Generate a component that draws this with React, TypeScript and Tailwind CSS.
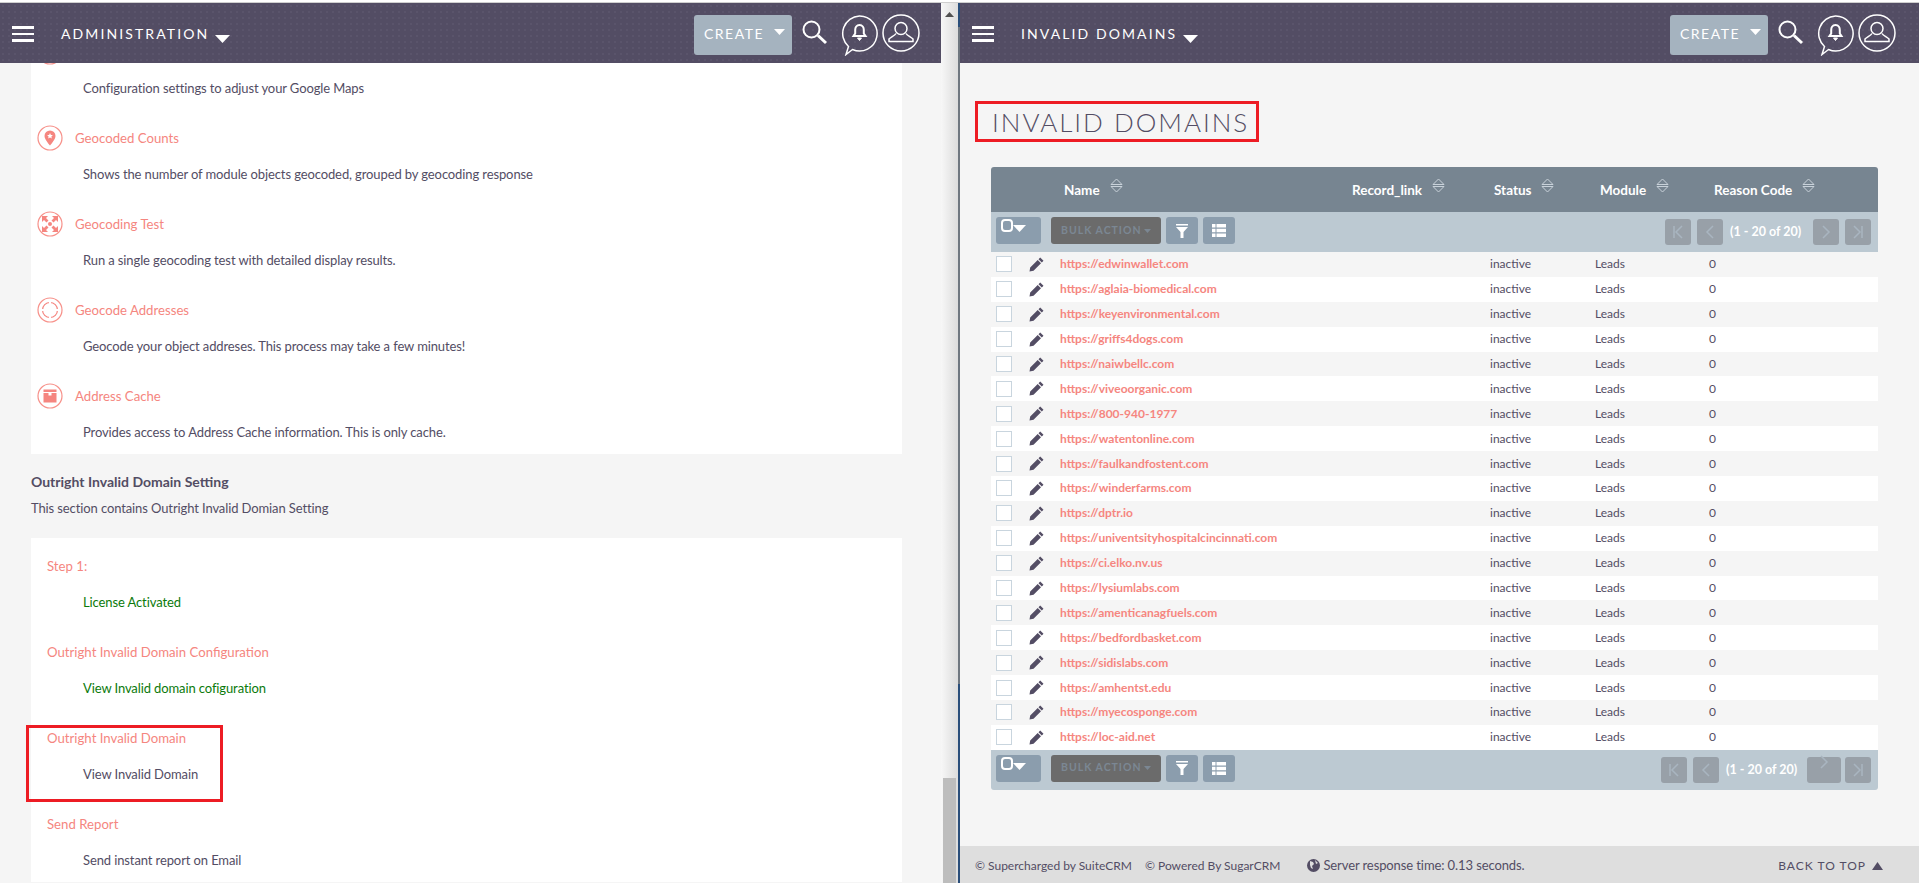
import type { ReactNode } from "react";

const domains = [
  "edwinwallet.com",
  "aglaia-biomedical.com",
  "keyenvironmental.com",
  "griffs4dogs.com",
  "naiwbellc.com",
  "viveoorganic.com",
  "800-940-1977",
  "watentonline.com",
  "faulkandfostent.com",
  "winderfarms.com",
  "dptr.io",
  "univentsityhospitalcincinnati.com",
  "ci.elko.nv.us",
  "lysiumlabs.com",
  "amenticanagfuels.com",
  "bedfordbasket.com",
  "sidislabs.com",
  "amhentst.edu",
  "myecosponge.com",
  "loc-aid.net",
];

const columns = ["Name", "Record_link", "Status", "Module", "Reason Code"];

function CircleIcon({ children }: { children: ReactNode }) {
  return (
    <svg width="26" height="26" viewBox="0 0 26 26" className="shrink-0">
      <circle cx="13" cy="13" r="12" fill="none" stroke="#f7918a" strokeWidth="1.2" />
      {children}
    </svg>
  );
}

const PinIcon = (
  <CircleIcon>
    <path d="M13 5.500a5.500 5.500 0 0 0-5.500 5.500c0 3.600 5.500 9.500 5.500 9.500s5.500-5.900 5.500-9.500A5.500 5.500 0 0 0 13 5.500Z" fill="#f58680" />
    <path d="M13 8l.9 1.900 2 .2-1.500 1.400.4 2-1.800-1-1.800 1 .4-2-1.500-1.400 2-.2Z" fill="#fff" />
  </CircleIcon>
);

const ExpandIcon = (
  <CircleIcon>
    <circle cx="13" cy="13" r="2" fill="#f58680" />
    <path d="M5 5h6l-2 2 2.500 2.500-2 2L7 9l-2 2ZM21 5v6l-2-2-2.500 2.500-2-2L17 7l-2-2ZM5 21v-6l2 2 2.500-2.500 2 2L9 19l2 2ZM21 21h-6l2-2-2.500-2.500 2-2L19 17l2-2Z" fill="#f58680" />
  </CircleIcon>
);

const TargetIcon = (
  <CircleIcon>
    <circle cx="13" cy="13" r="7.500" fill="none" stroke="#f58680" strokeWidth="1.200" />
    <path d="M13 4v4M13 18v4M4 13h4M18 13h4" stroke="#fff" strokeWidth="2" />
  </CircleIcon>
);

const BoxIcon = (
  <CircleIcon>
    <path d="M6.500 6.500h13v2.500h-13ZM6.500 10h5v2.500h3V10h5v9.500h-13Z" fill="#f58680" />
  </CircleIcon>
);

function Hamburger() {
  return (
    <div className="flex flex-col gap-[4px] w-[22px]">
      <div className="h-[2.5px] bg-white" />
      <div className="h-[2.5px] bg-white" />
      <div className="h-[2.5px] bg-white" />
    </div>
  );
}

function AppHeader({ title, left, right }: { title: string; left: string; right: string }) {
  return (
    <div className={`relative z-10 h-[60px] shrink-0 flex items-start bg-[#534d64] bg-[radial-gradient(#5a546b_1px,transparent_1px)] bg-[length:6px_6px] ${left} ${right}`}>
      <div className="mt-[23px]">
        <Hamburger />
      </div>
      <span className="ml-[27px] mt-[21px] text-[14px] leading-5 tracking-[2.1px] text-white">{title}</span>
      <svg width="15" height="8" viewBox="0 0 15 8" className="ml-[6px] mt-[32px]">
        <path d="M0 0h15L7.500 8Z" fill="#fff" />
      </svg>
      <div className="ml-auto mt-[12px] w-[98px] h-[40px] rounded-[3px] bg-[#a5b3bf] flex items-center pb-[4px] pl-[10px] text-[14px] tracking-[1.500px] text-white">
        CREATE
        <svg width="11" height="6" viewBox="0 0 11 6" className="ml-[10px] -mt-[2px]">
          <path d="M0 0h11L5.500 6Z" fill="#fff" />
        </svg>
      </div>
      <svg width="26" height="25" viewBox="0 0 26 25" className="ml-[10px] mt-[17px]" fill="none" stroke="#fff">
        <circle cx="9.500" cy="9.500" r="8" strokeWidth="2" />
        <path d="M16 15.500l8 7.500" strokeWidth="3" />
      </svg>
      <svg width="37" height="41" viewBox="0 0 37 41" className="ml-[13px] mt-[12px]" fill="none" stroke="#fff">
        <path d="M18.500 1a17.500 17.500 0 1 1-7 33.500L5 39.500l2.500-8A17.500 17.500 0 0 1 18.500 1Z" strokeWidth="1.500" />
        <path d="M18.500 10c-3 0-4.300 2.300-4.300 5v3.500l-1.700 2.500h12l-1.700-2.500V15c0-2.700-1.300-5-4.300-5Z" strokeWidth="2" />
        <path d="M16.500 23h4l-2 2.500Z" fill="#fff" />
      </svg>
      <svg width="38" height="38" viewBox="0 0 38 38" className="ml-[4px] mt-[11px]" fill="none" stroke="#fff" strokeWidth="1.500">
        <circle cx="19" cy="19" r="18" />
        <circle cx="19" cy="14.500" r="6" />
        <path d="M14 19.500c-1 2-5 3.500-7 5.500v2.500h24V25c-2-2-6-3.500-7-5.500" />
      </svg>
    </div>
  );
}

function Item({
  icon,
  title,
  desc,
  green,
  inset,
  children,
}: {
  icon?: ReactNode;
  title: string;
  desc: string;
  green?: boolean;
  inset: string;
  children?: ReactNode;
}) {
  return (
    <div className="relative h-[86px]">
      <div className={`h-[26px] flex items-center gap-[12px] text-[13.2px] text-[#f58680] ${inset}`}>
        {icon}
        {title && <span className="pt-[2px]">{title}</span>}
      </div>
      <div className={`mt-[13px] h-5 leading-5 ml-[52px] text-[13px] tracking-[-0.11px] ${green ? "text-[#0b7a0b]" : "text-[#534d64]"}`}>{desc}</div>
      {children}
    </div>
  );
}

function AdminPane() {
  return (
    <div className="w-[941px] shrink-0 flex flex-col h-[880px] overflow-hidden">
      <AppHeader title="ADMINISTRATION" left="pl-[12px]" right="pr-[21px]" />
      <div className="pl-[31px] w-[902px]">
        <div className="-mt-[24px] bg-white h-[415px]">
          <Item icon={<CircleIcon>{null}</CircleIcon>} title="" desc="Configuration settings to adjust your Google Maps" inset="pl-[6px]" />
          <Item icon={PinIcon} title="Geocoded Counts" desc="Shows the number of module objects geocoded, grouped by geocoding response" inset="pl-[6px]" />
          <Item icon={ExpandIcon} title="Geocoding Test" desc="Run a single geocoding test with detailed display results." inset="pl-[6px]" />
          <Item icon={TargetIcon} title="Geocode Addresses" desc="Geocode your object addreses. This process may take a few minutes!" inset="pl-[6px]" />
          <Item icon={BoxIcon} title="Address Cache" desc="Provides access to Address Cache information. This is only cache." inset="pl-[6px]" />
        </div>
        <h3 className="mt-[18px] h-5 leading-5 text-[14px] font-bold text-[#534d64]">Outright Invalid Domain Setting</h3>
        <p className="mt-[6px] h-5 leading-5 text-[13px] tracking-[-0.11px] text-[#534d64]">This section contains Outright Invalid Domian Setting</p>
        <div className="mt-[20px] bg-white pt-[15px] h-[344px]">
          <Item title="Step 1:" desc="License Activated" green inset="pl-[16px]" />
          <Item title="Outright Invalid Domain Configuration" desc="View Invalid domain cofiguration" green inset="pl-[16px]" />
          <Item title="Outright Invalid Domain" desc="View Invalid Domain" inset="pl-[16px]">
            <div className="absolute -left-[5px] top-0 w-[197px] h-[77px] border-[3px] border-[#ed1c24]" />
          </Item>
          <Item title="Send Report" desc="Send instant report on Email" inset="pl-[16px]" />
        </div>
      </div>
    </div>
  );
}

function SortIcon() {
  return (
    <svg width="13" height="15" viewBox="0 0 13 15" fill="none" stroke="#c9d2da" strokeWidth="1" className="-mt-[1px]">
      <path d="M6.500 1L12 6.500H1ZM1 8.500h11L6.500 14Z" />
    </svg>
  );
}

function PageButton({ d, className, raised }: { d: string; className?: string; raised?: boolean }) {
  return (
    <div className={`h-[26px] rounded-[3px] bg-[#98a0a8] flex items-center justify-center ${className ?? "w-[26px]"}`}>
      <svg width="14" height="16" viewBox="0 0 14 16" fill="none" stroke="#a9b5c0" strokeWidth="1.5" className={raised ? "-mt-[16px]" : ""}>
        <path d={d} />
      </svg>
    </div>
  );
}

function Toolbar({ bottom }: { bottom?: boolean }) {
  return (
    <div className={`bg-[#bcc9d2] flex items-start pl-[5px] pr-[7px] pt-[5px] h-[40px] ${bottom ? "rounded-b-[3px]" : ""}`}>
      <div className="w-[45px] h-[27px] rounded-[3px] bg-[#8b9dad] flex items-start pl-[5px] pt-[2px]">
        <div className="w-[12px] h-[13px] rounded-[4px] border-[2px] border-white" />
        <svg width="13" height="7" viewBox="0 0 13 7" className="mt-[6px]">
          <path d="M0 0h13L6.500 7Z" fill="#fff" />
        </svg>
      </div>
      <div className="ml-[10px] w-[110px] h-[27px] rounded-[3px] bg-[#6b6b6b] flex items-center pl-[10px] text-[10.5px] font-bold tracking-[1px] text-[#7b8793]">
        BULK ACTION
        <svg width="7" height="4" viewBox="0 0 7 4" className="ml-[2px]">
          <path d="M0 0h7L3.500 4Z" fill="#7b8793" />
        </svg>
      </div>
      <div className="ml-[5px] w-[32px] h-[27px] rounded-[3px] bg-[#8b9dad] flex items-center justify-center">
        <svg width="14" height="14" viewBox="0 0 14 14">
          <path d="M1 0h12v1.500H1ZM1 3h12L8.500 8v6h-3V8Z" fill="#fff" />
        </svg>
      </div>
      <div className="ml-[5px] w-[32px] h-[27px] rounded-[3px] bg-[#8b9dad] flex items-center justify-center">
        <svg width="14" height="13" viewBox="0 0 14 13">
          <path d="M0 0h3.500v3.500H0ZM4.500 0H14v3.500H4.500ZM0 4.700h3.500v3.500H0ZM4.500 4.700H14v3.500H4.500ZM0 9.500h3.500V13H0ZM4.500 9.500H14V13H4.500Z" fill="#fff" />
        </svg>
      </div>
      <div className="ml-auto mt-[2px] flex items-center">
        <PageButton d="M3 2v12M11 2L5 8l6 6" />
        <PageButton d="M10 2L4 8l6 6" className="w-[26px] ml-[6px]" />
        <span className={`w-[73px] ml-[7px] text-[12.5px] font-bold text-white leading-none whitespace-nowrap ${bottom ? "mr-[8px]" : "mr-[10px]"}`}>(1 - 20 of 20)</span>
        {bottom ? (
          <>
            <PageButton d="M4 2l6 6-6 6" className="w-[34px]" raised />
            <PageButton d="M3 2l6 6-6 6M11 2v12" className="w-[26px] ml-[4px]" />
          </>
        ) : (
          <>
            <PageButton d="M4 2l6 6-6 6" />
            <PageButton d="M3 2l6 6-6 6M11 2v12" className="w-[26px] ml-[6px]" />
          </>
        )}
      </div>
    </div>
  );
}

function PencilIcon() {
  return (
    <svg width="15" height="15" viewBox="0 0 15 15">
      <path d="M11.200 0.500l3.300 3.300-1.700 1.700-3.300-3.300ZM8.700 3l3.300 3.300-7.500 7.500L0.500 14.500l.7-4Z" fill="#534d64" />
    </svg>
  );
}

function DomainsPane() {
  return (
    <div className="flex-1 min-w-0 flex flex-col h-[880px] bg-[#f5f5f5] overflow-hidden">
      <AppHeader title="INVALID DOMAINS" left="pl-[12px]" right="pr-[23px]" />
      <div className="ml-[15px] mt-[38px] w-[284px] h-[41px] border-[3px] border-[#ed1c24] flex items-center pl-[14px]">
        <h1 className="text-[26px] font-light tracking-[2px] text-[#534d64] leading-none whitespace-nowrap">INVALID DOMAINS</h1>
      </div>
      <div className="ml-[31px] mt-[25px] w-[887px] text-[12px]">
        <div className="h-[45px] rounded-t-[3px] bg-[#778591] grid grid-cols-[73px_288px_142px_106px_114px_1fr] items-start pt-[12px] text-[13.5px] font-bold text-white">
          <div />
          {columns.map((c) => (
            <div key={c} className="flex items-start gap-[10px] whitespace-nowrap">
              <span className="leading-5 mt-[1px]">{c}</span>
              <SortIcon />
            </div>
          ))}
        </div>
        <Toolbar />
        {domains.map((d, i) => (
          <div
            key={d}
            className={`h-[24.9px] grid grid-cols-[69px_430px_105px_114px_1fr] items-center text-[#534d64] ${i % 2 === 1 ? "bg-white" : "bg-[#f5f5f5]"}`}
          >
            <div className="flex items-center">
              <div className="ml-[5px] w-[16px] h-[16px] bg-white border border-[#c9d5de]" />
              <div className="ml-[17px]">
                <PencilIcon />
              </div>
            </div>
            <span className="font-bold text-[#f58680]">https://{d}</span>
            <span>inactive</span>
            <span>Leads</span>
            <span>0</span>
          </div>
        ))}
        <Toolbar bottom />
      </div>
      <div className="mt-auto h-[37px] bg-[#dedede] flex items-center pt-[2px] pl-[15px] pr-[36px] text-[12px] text-[#534d64]">
        <span>© Supercharged by SuiteCRM</span>
        <span className="ml-[13px]">© Powered By SugarCRM</span>
        <svg width="13" height="13" viewBox="0 0 13 13" className="ml-[27px]">
          <circle cx="6.500" cy="6.500" r="6.500" fill="#534d64" />
          <path d="M3 2l3 1 1 2-2 2 1 3-2-1-1-3ZM8 1l3 3-2 1Z" fill="#dedede" />
        </svg>
        <span className="ml-[3px] text-[13px] tracking-[-0.1px]">Server response time: 0.13 seconds.</span>
        <span className="ml-auto tracking-[1px]">BACK TO TOP</span>
        <svg width="11" height="8" viewBox="0 0 11 8" className="ml-[6px]">
          <path d="M0 8L5.500 0 11 8Z" fill="#534d64" />
        </svg>
      </div>
    </div>
  );
}

function Scrollbar() {
  return (
    <div className="w-[17px] shrink-0 h-[880px] bg-linear-to-r from-[#f7f7f7] to-[#dcdcdc] flex flex-col items-center pt-[9px]">
      <svg width="9" height="5" viewBox="0 0 9 5">
        <path d="M0 5L4.500 0 9 5Z" fill="#505050" />
      </svg>
      <div className="mt-auto w-[13px] h-[105px] bg-[#bdbdbd]" />
    </div>
  );
}

export default function App() {
  return (
    <div className="w-[1919px] h-[883px] overflow-hidden bg-[#f5f5f5] font-[Lato,sans-serif]">
      <div className="h-[3px] bg-white border-b border-[#cfcfcf]" />
      <div className="flex">
        <AdminPane />
        <Scrollbar />
        <div className="w-[2px] shrink-0 flex flex-col">
          <div className="h-[24px] bg-[#2a4e7a]" />
          <div className="flex-1 bg-[#6f7780]" />
          <div className="h-[199px] bg-[#2a4e7a]" />
        </div>
        <DomainsPane />
      </div>
    </div>
  );
}
